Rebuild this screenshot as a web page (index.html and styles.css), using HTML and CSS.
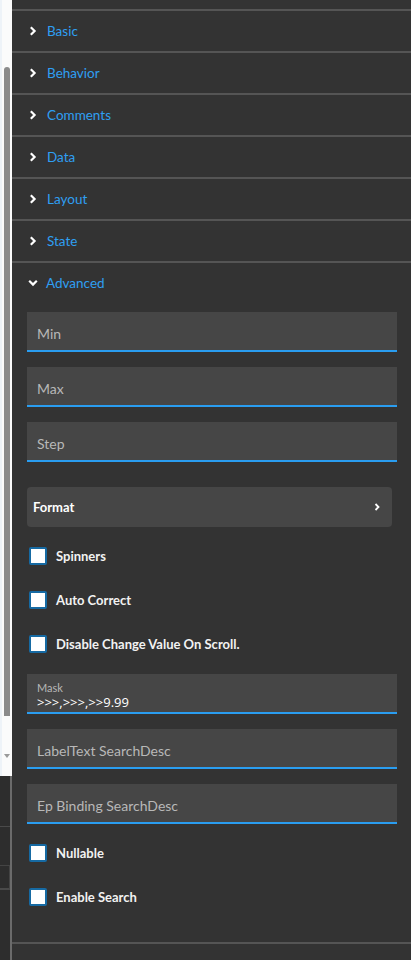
FILE: index.html
```html
<!DOCTYPE html>
<html>
<head>
<meta charset="utf-8">
<link rel="stylesheet" href="styles.css">
</head>
<body>
<div class="app">
  <div class="gutter">
    <div class="scroll">
      <div class="thumb"></div>
      <div class="arrow"></div>
    </div>
    <div class="gutter-low">
      <div class="g-row g-a"></div>
      <div class="g-row g-b"></div>
      <div class="g-rest"></div>
    </div>
  </div>
  <div class="panel">
    <div class="spacer-top"></div>
    <div class="section"><svg class="chev" viewBox="0 0 8 10"><path d="M1.8 1.2 L5.6 5 L1.8 8.8" /></svg><span>Basic</span></div>
    <div class="section"><svg class="chev" viewBox="0 0 8 10"><path d="M1.8 1.2 L5.6 5 L1.8 8.8" /></svg><span>Behavior</span></div>
    <div class="section"><svg class="chev" viewBox="0 0 8 10"><path d="M1.8 1.2 L5.6 5 L1.8 8.8" /></svg><span>Comments</span></div>
    <div class="section"><svg class="chev" viewBox="0 0 8 10"><path d="M1.8 1.2 L5.6 5 L1.8 8.8" /></svg><span>Data</span></div>
    <div class="section"><svg class="chev" viewBox="0 0 8 10"><path d="M1.8 1.2 L5.6 5 L1.8 8.8" /></svg><span>Layout</span></div>
    <div class="section"><svg class="chev" viewBox="0 0 8 10"><path d="M1.8 1.2 L5.6 5 L1.8 8.8" /></svg><span>State</span></div>
    <div class="section open"><svg class="chev down" viewBox="0 0 10 8"><path d="M1.2 1.8 L5 5.6 L8.8 1.8" /></svg><span>Advanced</span></div>
    <div class="content">
      <div class="field"><span class="ph">Min</span></div>
      <div class="field"><span class="ph">Max</span></div>
      <div class="field"><span class="ph">Step</span></div>
      <div class="format"><span>Format</span><svg class="fchev" viewBox="0 0 8 10"><path d="M2.5 2 L5.5 5 L2.5 8" /></svg></div>
      <div class="checks">
        <div class="check"><span class="box"></span><span>Spinners</span></div>
        <div class="check"><span class="box"></span><span>Auto Correct</span></div>
        <div class="check"><span class="box"></span><span>Disable Change Value On Scroll.</span></div>
      </div>
      <div class="field filled"><span class="lbl">Mask</span><span class="val">&gt;&gt;&gt;,&gt;&gt;&gt;,&gt;&gt;9.99</span></div>
      <div class="field"><span class="ph">LabelText SearchDesc</span></div>
      <div class="field last"><span class="ph">Ep Binding SearchDesc</span></div>
      <div class="checks low">
        <div class="check"><span class="box"></span><span>Nullable</span></div>
        <div class="check"><span class="box"></span><span>Enable Search</span></div>
      </div>
    </div>
    <div class="section empty"></div>
  </div>
</div>
</body>
</html>
```

FILE: styles.css
```css
html, body {
  margin: 0;
  padding: 0;
  background: #333333;
}
body {
  font-family: Lato, "Noto Sans", sans-serif;
  width: 411px;
  height: 960px;
  overflow: hidden;
}
.app {
  display: flex;
  height: 960px;
}
.gutter {
  width: 12px;
  display: flex;
  flex-direction: column;
  flex-shrink: 0;
}
.scroll {
  height: 776px;
  flex-shrink: 0;
  background: #fbfbfb;
  border-left: 2px solid #eef3f8;
  box-sizing: border-box;
  width: 12px;
  display: flex;
  flex-direction: column;
  align-items: flex-start;
  padding-top: 67px;
  padding-left: 2px;
}
.thumb {
  width: 6px;
  height: 649px;
  flex-shrink: 0;
  background: #8b8b8b;
  border-radius: 3px 3px 0 0;
}
.arrow {
  margin-top: 38px;
  width: 0;
  height: 0;
  border-left: 3px solid transparent;
  border-right: 3px solid transparent;
  border-top: 4px solid #9a9a9a;
}
.gutter-low {
  flex: 1;
  background: #2d2d2d;
  border-right: 2px solid #6b6b6b;
  display: flex;
  flex-direction: column;
}
.g-a {
  height: 50px;
  border-bottom: 1px solid #4a4a4a;
}
.g-b {
  margin-top: 38px;
  height: 22px;
  border-top: 1px solid #444;
  border-right: 1px solid #444;
  border-bottom: 2px solid #4a4a4a;
}
.panel {
  flex: 1;
  background: #333333;
  display: flex;
  flex-direction: column;
  overflow: hidden;
}
.panel > *, .content > * {
  flex-shrink: 0;
}
.spacer-top {
  height: 9px;
}
.section {
  height: 40px;
  border-top: 2px solid #555555;
  display: flex;
  align-items: center;
  padding-left: 17px;
  padding-bottom: 1px;
  box-sizing: border-box;
  height: 42px;
  color: #2f9ff2;
  font-size: 13.5px;
}
.section span {
  margin-left: 10px;
}
.chev {
  width: 8px;
  height: 10px;
  fill: none;
  stroke: #ffffff;
  stroke-width: 2.2;
}
.chev.down {
  width: 10px;
  height: 8px;
  margin-left: -1px;
}
.section.open span {
  margin-left: 8px;
}
.content {
  padding: 9px 14px 23px 15px;
  display: flex;
  flex-direction: column;
}
.field {
  height: 38px;
  background: #464646;
  border-bottom: 2px solid #2a9df0;
  display: flex;
  flex-direction: column;
  justify-content: center;
  padding-left: 10px;
  margin-bottom: 15px;
}
.field.last {
  margin-bottom: 0;
}
.ph {
  color: #b8b8b8;
  font-size: 14px;
  padding-top: 4px;
}
.field.filled {
  justify-content: flex-start;
  padding-top: 7px;
  height: 31px;
  margin-top: 8px;
}
.lbl {
  color: #b8b8b8;
  font-size: 11px;
  line-height: 13px;
}
.val {
  color: #ffffff;
  font-size: 13px;
  line-height: 16px;
  font-family: "Open Sans", sans-serif;
}
.format {
  margin-top: 10px;
  margin-right: 5px;
  height: 40px;
  background: #464646;
  border-radius: 4px;
  display: flex;
  align-items: center;
  justify-content: space-between;
  padding: 0 11px 0 6px;
  color: #ffffff;
  font-size: 13px;
  font-weight: 700;
}
.fchev {
  width: 8px;
  height: 10px;
  fill: none;
  stroke: #ffffff;
  stroke-width: 1.8;
}
.checks {
  display: flex;
  flex-direction: column;
  margin-top: 7px;
}
.check {
  height: 44px;
  display: flex;
  align-items: center;
  color: #f2f2f2;
  font-size: 13px;
  font-weight: 700;
}
.box {
  width: 14px;
  height: 14px;
  background: #ffffff;
  border: 2px solid #166aa3;
  border-radius: 2px;
  margin-left: 2px;
  margin-right: 9px;
}
.section.empty {
  height: 20px;
}
```
